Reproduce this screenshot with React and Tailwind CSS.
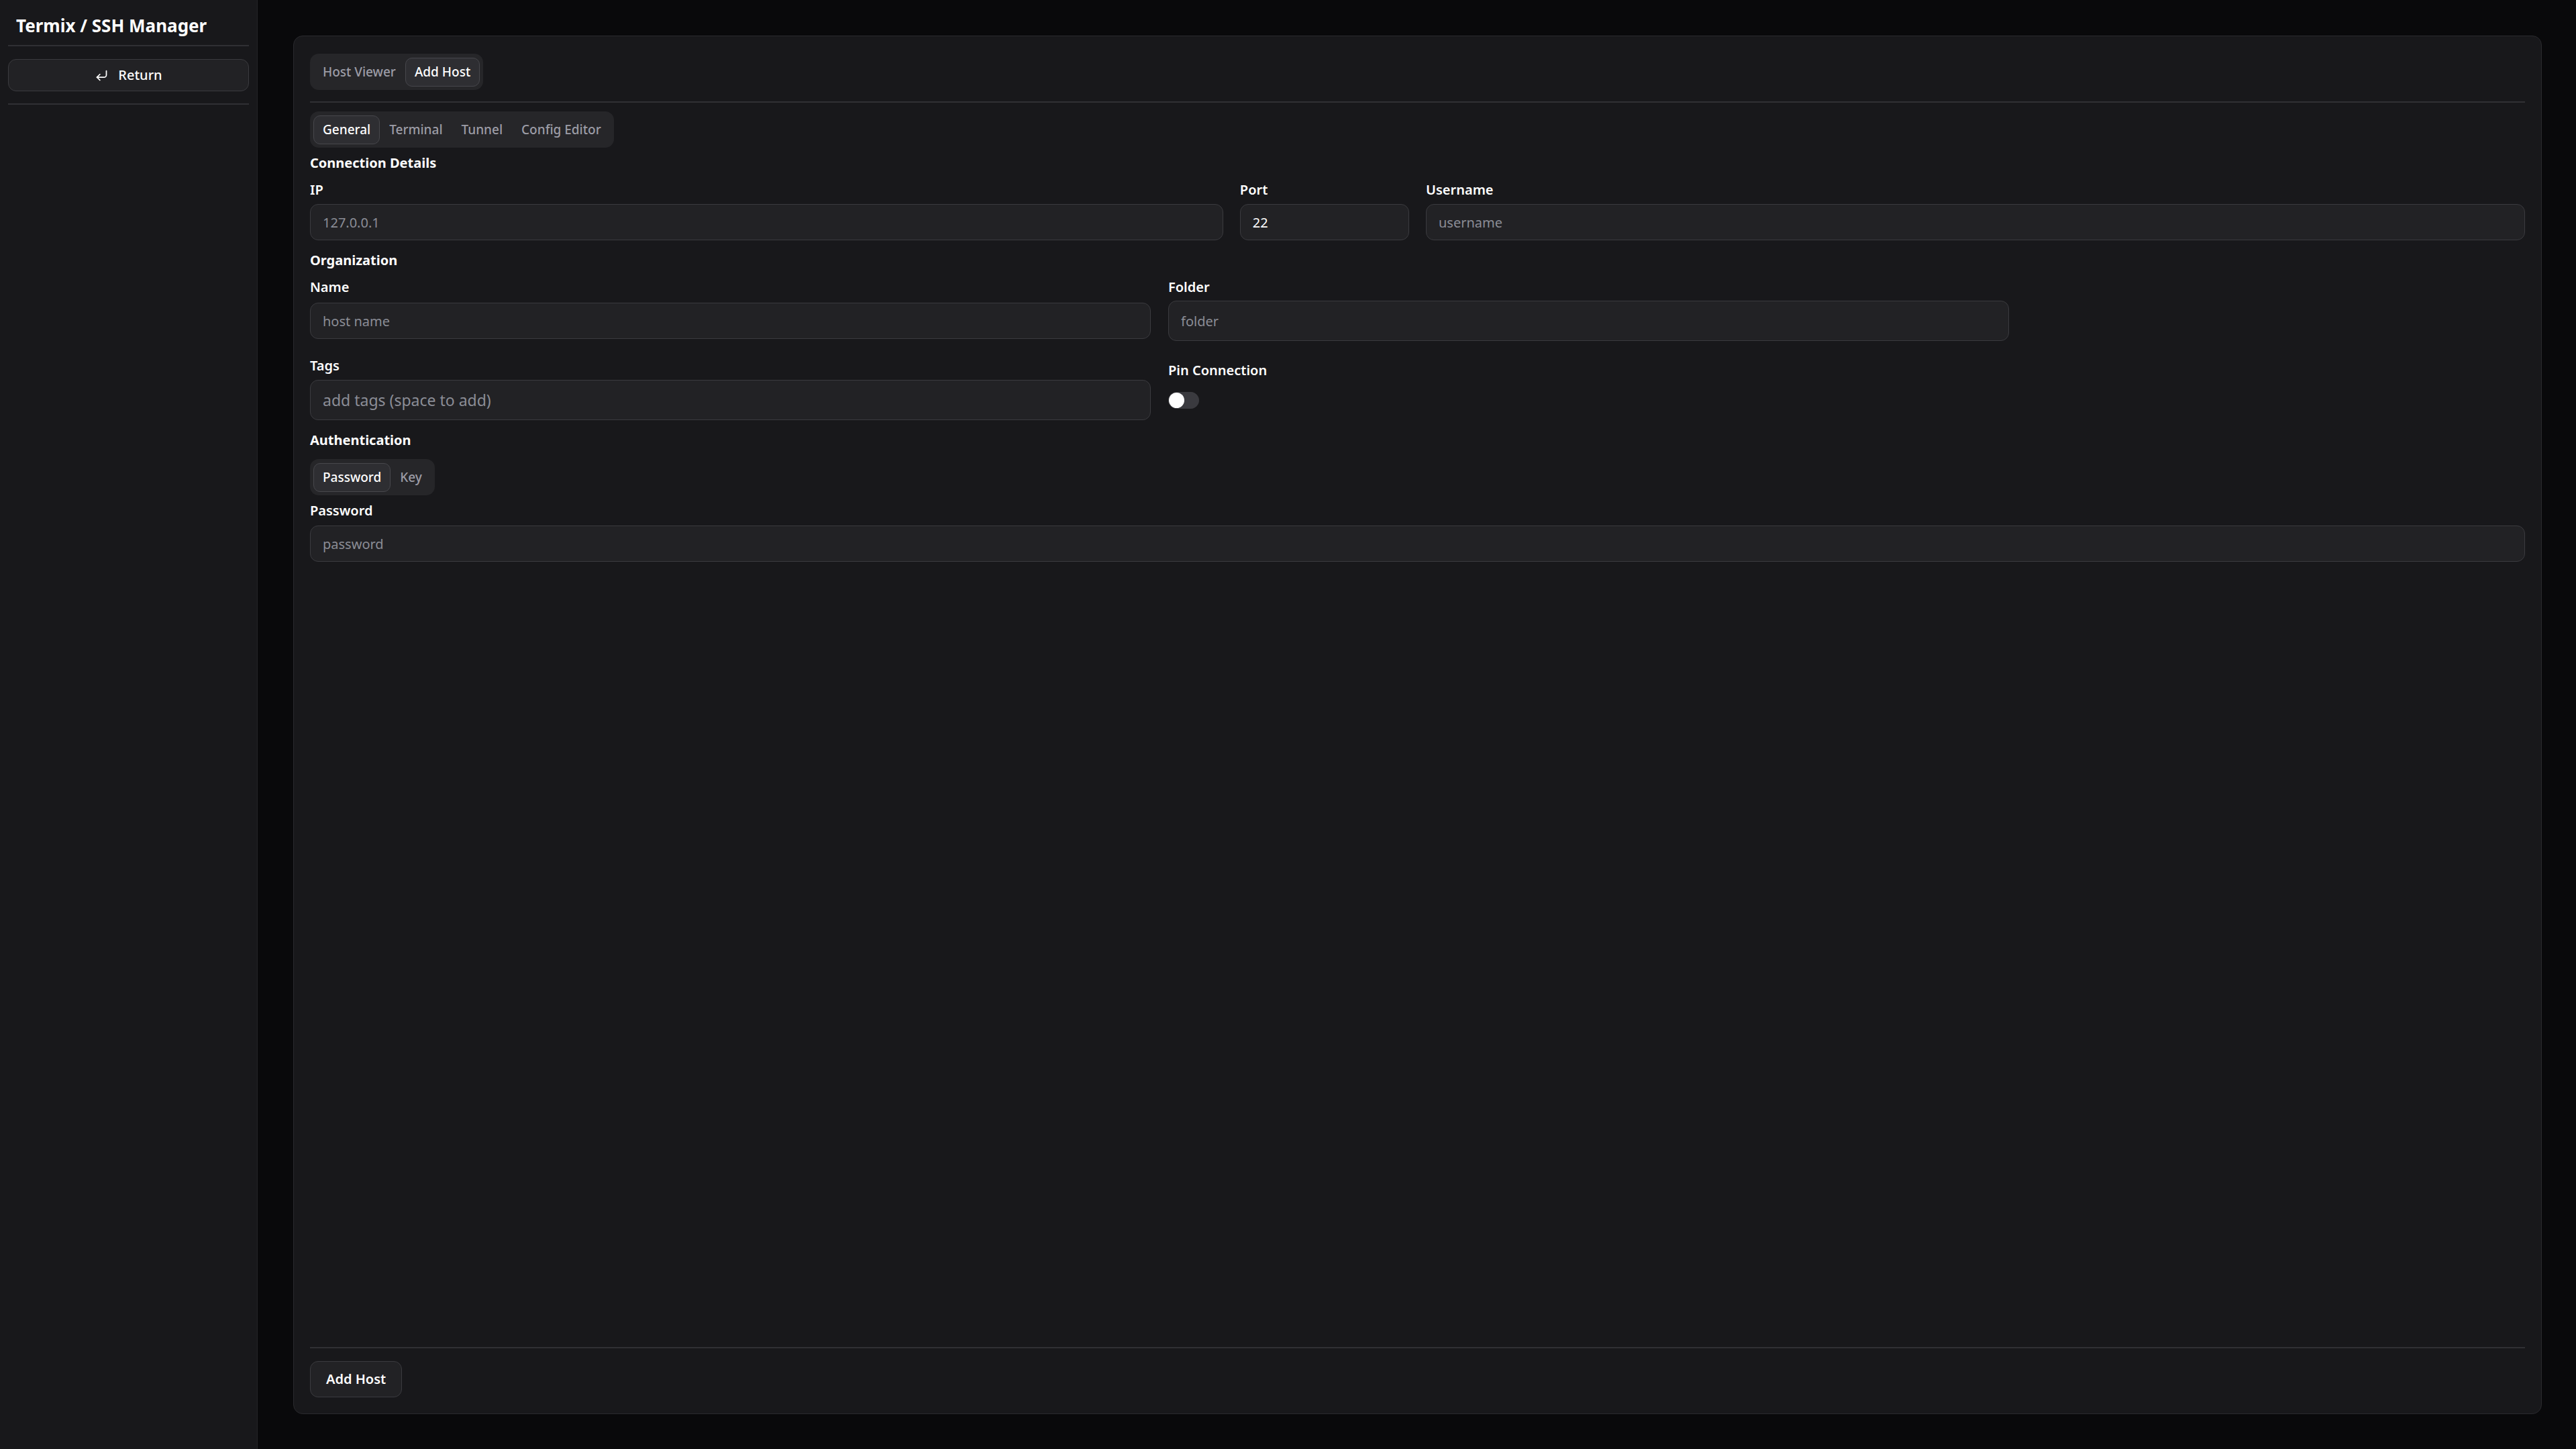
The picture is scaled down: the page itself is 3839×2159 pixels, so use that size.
import { useState } from 'react'
import { CornerDownLeft } from 'lucide-react'

const sans = "font-['Noto_Sans',_'Liberation_Sans',_sans-serif]"

function TabList({ items, active, onChange }) {
  return (
    <div className="inline-flex self-start items-center h-[54px] p-[5px] rounded-[13px] bg-[#262629]">
      {items.map((item) => (
        <button
          key={item}
          type="button"
          onClick={() => onChange(item)}
          className={`h-[43px] px-[13px] rounded-[10px] border text-[19px] font-medium leading-none ${
            item === active ? 'bg-[#2e2e32] border-[#47474c] text-white' : 'border-transparent text-[#9c9ca6]'
          }`}
        >
          {item}
        </button>
      ))}
    </div>
  )
}

function FieldLabel({ children, className = '' }) {
  return <label className={`block h-[22px] text-[20px] font-semibold leading-[22px] text-white ${className}`}>{children}</label>
}

function SectionTitle({ children, className = '' }) {
  return <h3 className={`h-[22px] text-[20px] font-bold leading-[22px] text-white ${className}`}>{children}</h3>
}

function TextInput({ placeholder, value, height = 'h-[54px]', size = 'text-[20px]', className = '' }) {
  return (
    <input
      className={`w-full ${height} px-[18px] rounded-[12px] border border-[#3b3b3f] bg-[#222225] ${size} text-white placeholder:text-[#8b8d96] outline-none ${className}`}
      placeholder={placeholder}
      defaultValue={value}
    />
  )
}

function PinSwitch() {
  const [on, setOn] = useState(false)
  return (
    <button
      type="button"
      aria-pressed={on}
      onClick={() => setOn(!on)}
      className={`w-[46px] h-[25px] rounded-full flex items-center p-[1px] ${on ? 'bg-white justify-end' : 'bg-[#3a3a3f] justify-start'}`}
    >
      <span className={`w-[23px] h-[23px] rounded-full ${on ? 'bg-[#18181b]' : 'bg-white'}`} />
    </button>
  )
}

export default function App() {
  const [view, setView] = useState('Add Host')
  const [section, setSection] = useState('General')
  const [auth, setAuth] = useState('Password')

  return (
    <div className={`flex w-full h-[2159px] bg-[#09090b] ${sans}`}>
      <aside className="w-[384px] shrink-0 h-full bg-[#18181b] border-r border-[#232326] px-[12px] flex flex-col">
        <div className="h-[67px] flex items-center pl-[12px] pt-[8px]">
          <h1 className="text-[26px] font-bold text-white leading-none">Termix / SSH Manager</h1>
        </div>
        <div className="h-[2px] bg-[#303034]" />
        <button
          type="button"
          className="mt-[19px] h-[48px] w-full rounded-[12px] border border-[#3b3b3f] bg-[#222225] flex items-center justify-center gap-[14px] text-[20px] font-medium text-white"
        >
          <CornerDownLeft size={21} strokeWidth={2} />
          Return
        </button>
        <div className="mt-[18px] h-[2px] bg-[#303034]" />
      </aside>

      <main className="flex-1 min-w-0 pl-[53px] pr-[51px] pt-[53px] pb-[52px]">
        <div className="h-full rounded-[14px] border border-[#2a2a2e] bg-[#18181b] px-[24px] pt-[26px] pb-[24px] flex flex-col">
          <TabList items={['Host Viewer', 'Add Host']} active={view} onChange={setView} />
          <div className="mt-[17px] h-[2px] bg-[#303034]" />

          <div className="mt-[13px] flex flex-col">
            <TabList items={['General', 'Terminal', 'Tunnel', 'Config Editor']} active={section} onChange={setSection} />

            <SectionTitle className="mt-[12px]">Connection Details</SectionTitle>
            <div className="mt-[18px] grid grid-cols-12 gap-x-[25px]">
              <div className="col-span-5">
                <FieldLabel>IP</FieldLabel>
                <TextInput className="mt-[10px]" placeholder="127.0.0.1" />
              </div>
              <div className="col-span-1">
                <FieldLabel>Port</FieldLabel>
                <TextInput className="mt-[10px]" value="22" />
              </div>
              <div className="col-span-6">
                <FieldLabel>Username</FieldLabel>
                <TextInput className="mt-[10px]" placeholder="username" />
              </div>
            </div>

            <SectionTitle className="mt-[19px]">Organization</SectionTitle>
            <div className="mt-[18px] grid grid-cols-[1253px_1253px] gap-x-[26px]">
              <div>
                <FieldLabel>Name</FieldLabel>
                <TextInput className="mt-[12px]" placeholder="host name" />
              </div>
              <div>
                <FieldLabel>Folder</FieldLabel>
                <TextInput className="mt-[9px]" height="h-[60px]" placeholder="folder" />
              </div>
              <div className="mt-[26px]">
                <FieldLabel>Tags</FieldLabel>
                <TextInput className="mt-[10px]" height="h-[60px]" size="text-[23px]" placeholder="add tags (space to add)" />
              </div>
              <div className="mt-[33px]">
                <FieldLabel>Pin Connection</FieldLabel>
                <div className="mt-[21px]">
                  <PinSwitch />
                </div>
              </div>
            </div>

            <SectionTitle className="mt-[19px]">Authentication</SectionTitle>
            <div className="mt-[17px] flex">
              <TabList items={['Password', 'Key']} active={auth} onChange={setAuth} />
            </div>
            <FieldLabel className="mt-[12px]">Password</FieldLabel>
            <TextInput className="mt-[11px]" placeholder="password" />
          </div>

          <div className="mt-auto">
            <div className="h-[2px] bg-[#303034]" />
            <button
              type="button"
              className="mt-[19px] h-[54px] px-[23px] rounded-[12px] border border-[#3b3b3f] bg-[#222225] text-[20px] font-semibold text-white"
            >
              Add Host
            </button>
          </div>
        </div>
      </main>
    </div>
  )
}
